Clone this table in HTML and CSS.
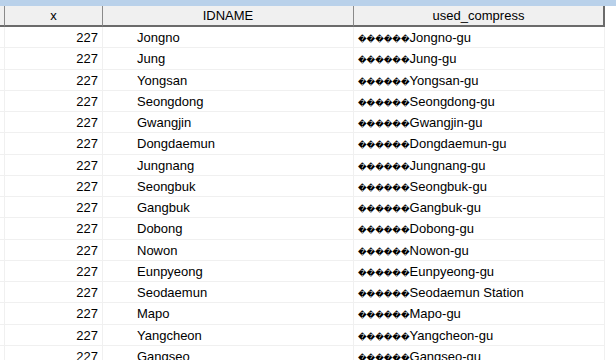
FILE: index.html
```html
<!DOCTYPE html>
<html>
<head>
<meta charset="utf-8">
<link rel="stylesheet" href="styles.css">
</head>
<body>
<div class="topbar"></div>
<div class="grid">
  <div class="hc hc-row"></div>
  <div class="hc">x</div>
  <div class="hc">IDNAME</div>
  <div class="hc hc-last">used_compress</div>

  <div class="c rh"></div><div class="c num">227</div><div class="c name">Jongno</div><div class="c comp"><span class="q">������</span>Jongno-gu</div>
  <div class="c rh"></div><div class="c num">227</div><div class="c name">Jung</div><div class="c comp"><span class="q">������</span>Jung-gu</div>
  <div class="c rh"></div><div class="c num">227</div><div class="c name">Yongsan</div><div class="c comp"><span class="q">������</span>Yongsan-gu</div>
  <div class="c rh"></div><div class="c num">227</div><div class="c name">Seongdong</div><div class="c comp"><span class="q">������</span>Seongdong-gu</div>
  <div class="c rh"></div><div class="c num">227</div><div class="c name">Gwangjin</div><div class="c comp"><span class="q">������</span>Gwangjin-gu</div>
  <div class="c rh"></div><div class="c num">227</div><div class="c name">Dongdaemun</div><div class="c comp"><span class="q">������</span>Dongdaemun-gu</div>
  <div class="c rh"></div><div class="c num">227</div><div class="c name">Jungnang</div><div class="c comp"><span class="q">������</span>Jungnang-gu</div>
  <div class="c rh"></div><div class="c num">227</div><div class="c name">Seongbuk</div><div class="c comp"><span class="q">������</span>Seongbuk-gu</div>
  <div class="c rh"></div><div class="c num">227</div><div class="c name">Gangbuk</div><div class="c comp"><span class="q">������</span>Gangbuk-gu</div>
  <div class="c rh"></div><div class="c num">227</div><div class="c name">Dobong</div><div class="c comp"><span class="q">������</span>Dobong-gu</div>
  <div class="c rh"></div><div class="c num">227</div><div class="c name">Nowon</div><div class="c comp"><span class="q">������</span>Nowon-gu</div>
  <div class="c rh"></div><div class="c num">227</div><div class="c name">Eunpyeong</div><div class="c comp"><span class="q">������</span>Eunpyeong-gu</div>
  <div class="c rh"></div><div class="c num">227</div><div class="c name">Seodaemun</div><div class="c comp"><span class="q">������</span>Seodaemun Station</div>
  <div class="c rh"></div><div class="c num">227</div><div class="c name">Mapo</div><div class="c comp"><span class="q">������</span>Mapo-gu</div>
  <div class="c rh"></div><div class="c num">227</div><div class="c name">Yangcheon</div><div class="c comp"><span class="q">������</span>Yangcheon-gu</div>
  <div class="c rh"></div><div class="c num">227</div><div class="c name">Gangseo</div><div class="c comp"><span class="q">������</span>Gangseo-gu</div>
</div>
</body>
</html>
```
FILE: styles.css
```css
html, body {
  margin: 0;
  padding: 0;
  background: #ffffff;
  overflow: hidden;
  width: 616px;
  height: 360px;
}
body {
  font-family: "Liberation Sans", Arial, sans-serif;
  font-size: 13px;
  color: #000000;
}
.topbar {
  height: 6px;
  background: #b9d1ea;
}
.grid {
  display: grid;
  grid-template-columns: 5px 98px 251px 251px;
  grid-template-rows: 21px;
  grid-auto-rows: 21.27px;
}
.hc {
  background: #f0f0f0;
  border-bottom: 2px solid #6b6b6b;
  border-right: 1px solid #8a8a8a;
  text-align: center;
  line-height: 19px;
  height: 21px;
  box-sizing: border-box;
  color: #000;
}
.hc-last {
  border-right: 2px solid #6b6b6b;
}
.c {
  box-sizing: border-box;
  border-bottom: 1px solid #f0f0f0;
  border-right: 1px solid #f0f0f0;
  line-height: 20px;
  padding-top: 1px;
  white-space: nowrap;
  overflow: hidden;
}
.num {
  text-align: right;
  padding-right: 4px;
}
.name {
  padding-left: 34px;
}
.comp {
  padding-left: 4px;
}
.q {
  font-family: "DejaVu Sans", sans-serif;
  font-size: 8.4px;
}
```
